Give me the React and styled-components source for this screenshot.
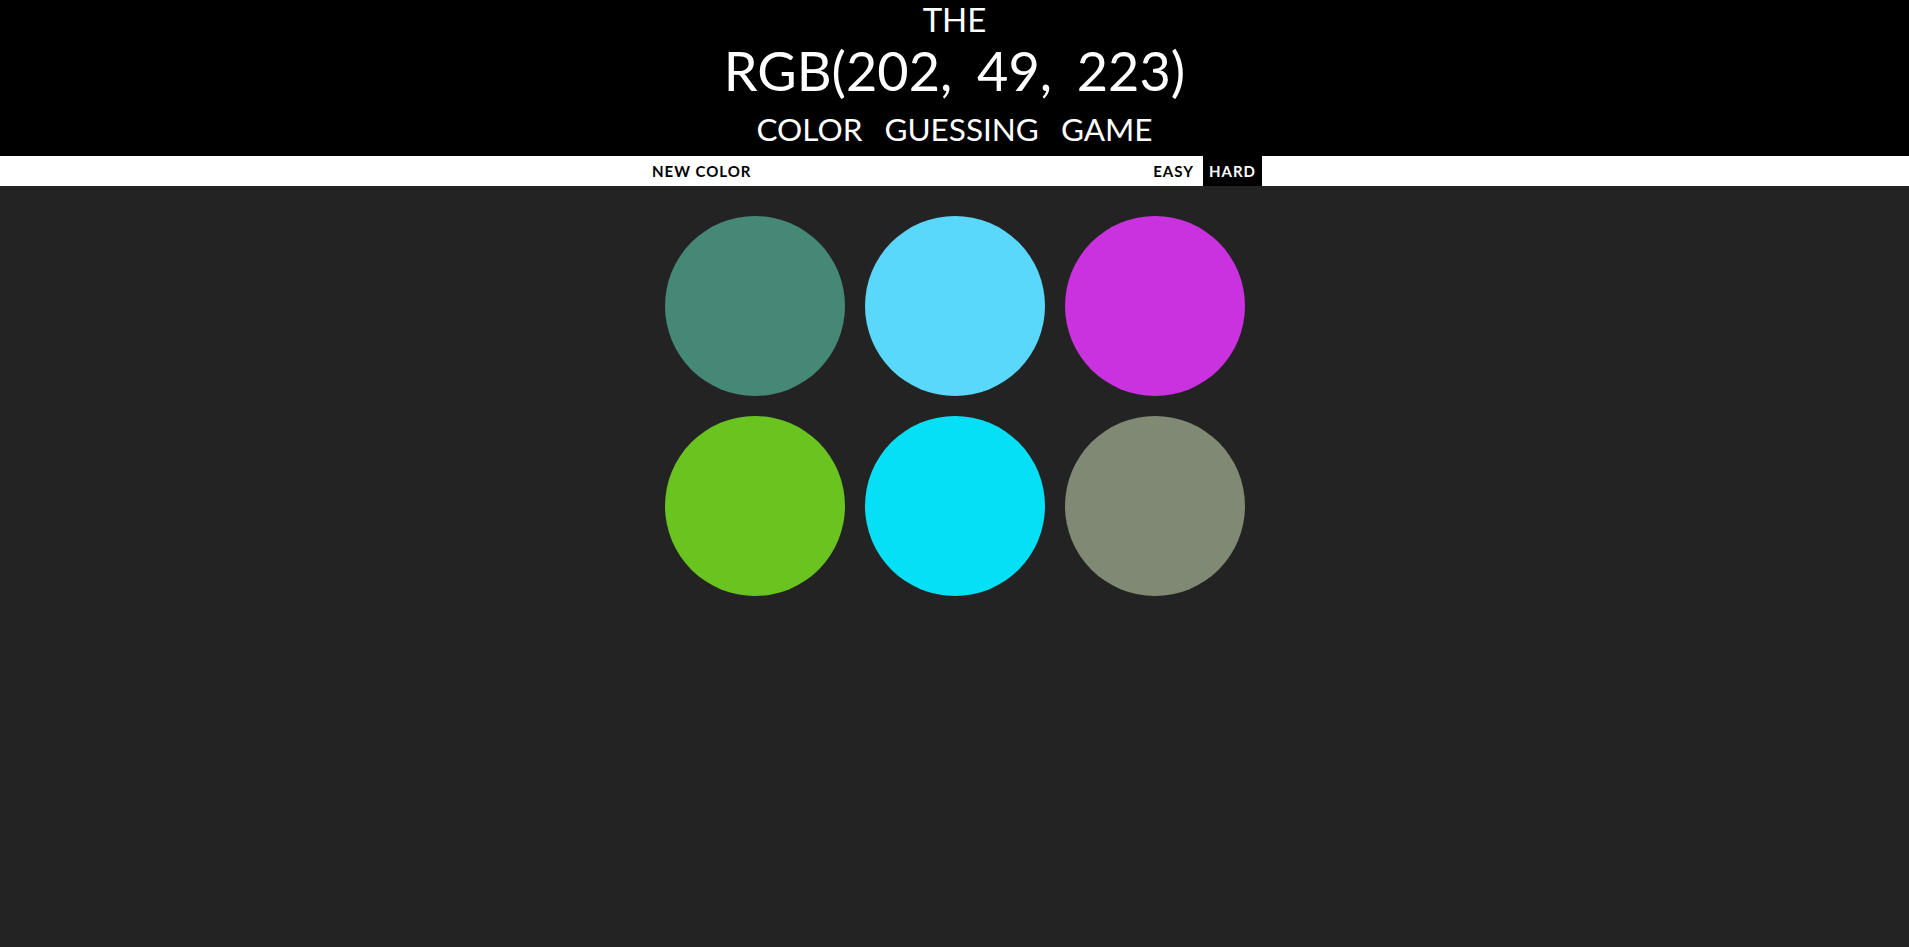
import React, { useState } from 'react';
import styled, { createGlobalStyle } from 'styled-components';

const GlobalStyle = createGlobalStyle`
  html, body {
    margin: 0;
    padding: 0;
    background-color: #232323;
    font-family: Lato, "Open Sans", Arial, sans-serif;
  }
`;

const Header = styled.h1`
  margin: 0;
  background-color: #000;
  color: #fff;
  text-align: center;
  text-transform: uppercase;
  font-weight: normal;
`;

const Line = styled.div`
  font-size: ${({ size }) => size}px;
  line-height: ${({ lh }) => lh}px;
  height: ${({ lh }) => lh}px;
  word-spacing: ${({ ws }) => ws || 0}px;
`;

const Stripe = styled.div`
  background-color: #fff;
  height: 30px;
  display: flex;
  justify-content: center;
  align-items: stretch;
`;

const Button = styled.button`
  border: none;
  margin: 0;
  padding: 0 ${({ selected }) => (selected ? 6 : 5)}px;
  height: 30px;
  background: ${({ selected }) => (selected ? '#000' : '#fff')};
  color: ${({ selected }) => (selected ? '#fff' : '#000')};
  font-family: Lato, "Open Sans", Arial, sans-serif;
  font-weight: 700;
  font-size: 15px;
  letter-spacing: 1px;
  text-transform: uppercase;
  outline: none;
  cursor: pointer;
`;

const Message = styled.span`
  display: inline-block;
  width: 20%;
  margin: 0 6px 0 4px;
`;

const ModeButton = styled(Button)`
  margin-left: 4px;
`;

const Board = styled.div`
  width: 600px;
  margin: 20px auto;
  padding: 10px;
  box-sizing: border-box;
  display: grid;
  grid-template-columns: repeat(3, 180px);
  gap: 20px;
`;

const Square = styled.div`
  width: 180px;
  height: 180px;
  border-radius: 50%;
  background-color: ${({ color }) => color};
`;

const colors = [
  'rgb(69, 136, 117)',
  'rgb(90, 216, 251)',
  'rgb(202, 49, 223)',
  'rgb(106, 196, 32)',
  'rgb(6, 224, 246)',
  'rgb(128, 137, 116)',
];

export default function App() {
  const [mode, setMode] = useState('hard');
  const picked = colors[2];

  return (
    <>
      <GlobalStyle />
      <Header>
        <Line size={33} lh={39}>The</Line>
        <Line size={54} lh={63} ws={11}>{picked.toUpperCase()}</Line>
        <Line size={31.5} lh={54} ws={14}>Color Guessing Game</Line>
      </Header>
      <Stripe>
        <Button>New Color</Button>
        <Message></Message>
        <Button selected={mode === 'easy'} onClick={() => setMode('easy')}>Easy</Button>
        <ModeButton selected={mode === 'hard'} onClick={() => setMode('hard')}>Hard</ModeButton>
      </Stripe>
      <Board>
        {colors.map((c, i) => (
          <Square key={i} color={c} />
        ))}
      </Board>
    </>
  );
}
